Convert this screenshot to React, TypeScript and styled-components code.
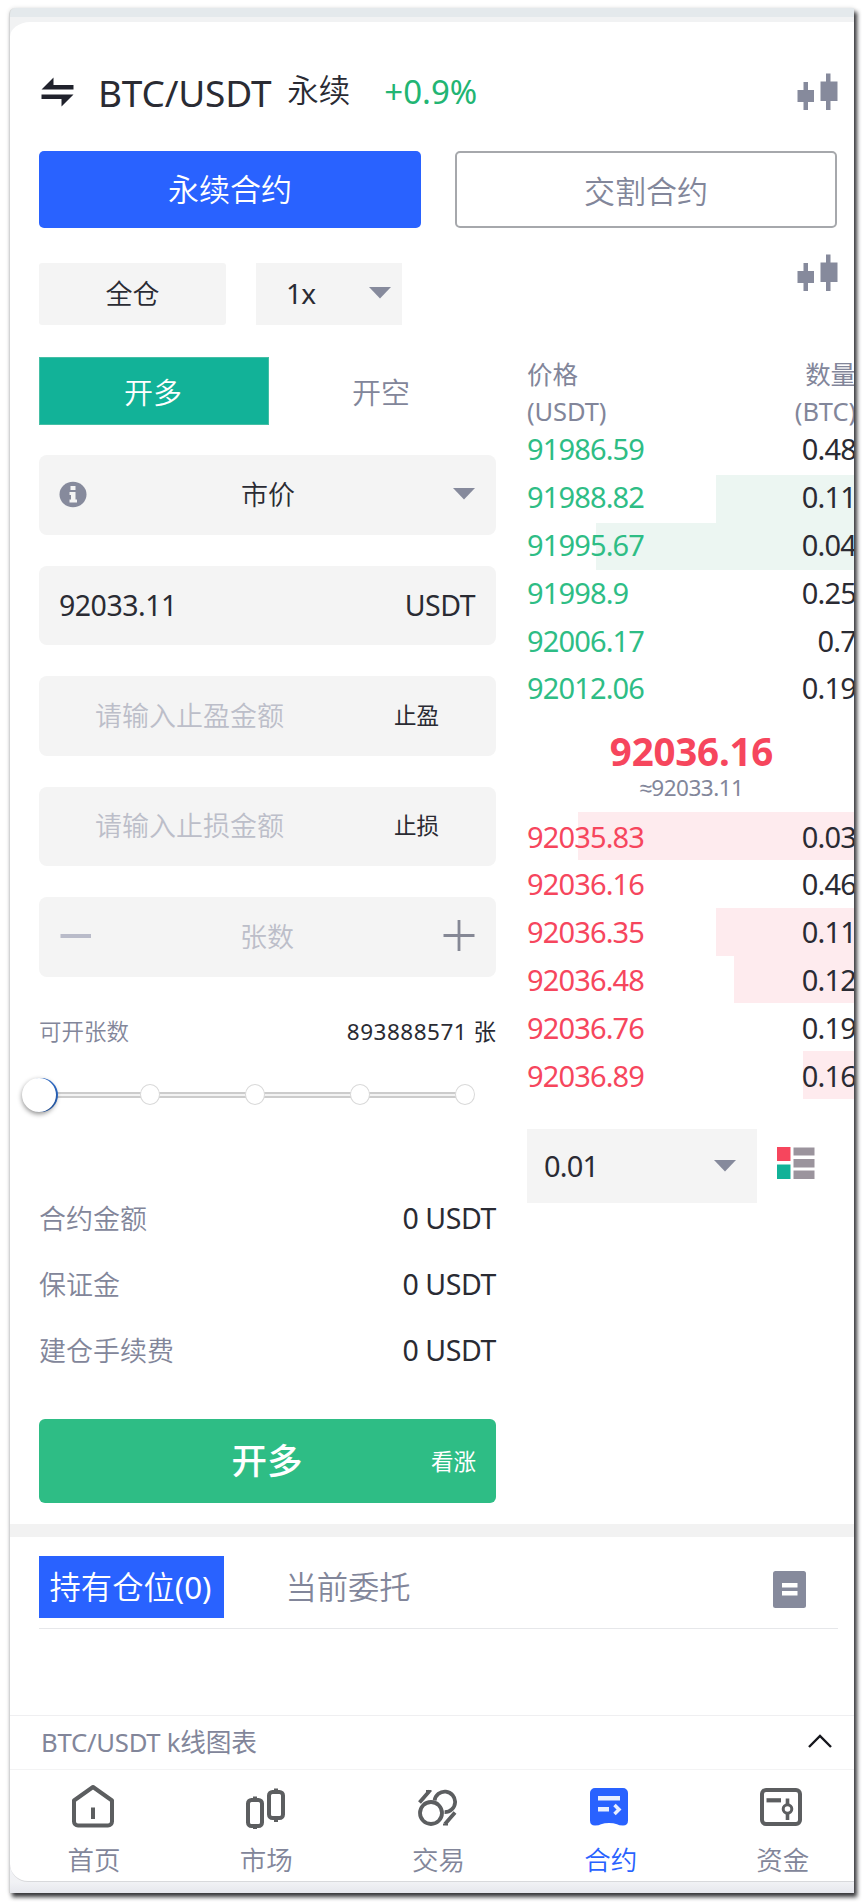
import React from "react";
import styled, { createGlobalStyle } from "styled-components";

const GlobalStyle = createGlobalStyle`
  * { box-sizing: border-box; }
  body {
    margin: 0;
    background: #fff;
    color: #2a2b33;
    font-family: "Noto Sans", "Noto Sans CJK SC", sans-serif;
  }
`;

const muted = "#82869a";

const Page = styled.div`
  width: 865px;
  height: 1904px;
  padding: 8px 11px 11px 9px;
  overflow: hidden;
`;

const Frame = styled.div`
  height: 1885px;
  padding-top: 9px;
  background: linear-gradient(#e4e9ec 0 9px, #f1f2f3 9px 40px, #f1f2f5 1874px, #e6e7ed 1885px);
  border-left: 1px solid #d3d4d5;
  border-radius: 6px 0 0 0;
  box-shadow: 3px 4px 4px 0 rgba(20, 20, 24, 0.85), 0 0 4px rgba(0, 0, 0, 0.12);
  overflow: hidden;
`;

const Card = styled.main`
  display: flex;
  flex-direction: column;
  height: 1865px;
  border-top: 5px solid #f1f2f3;
  background: #fff;
  border-radius: 20px 0 0 18px;
  border-bottom: 1px solid #d8d9dc;
  overflow: hidden;
`;

const Header = styled.header`
  display: flex;
  align-items: center;
  height: 129px;
  padding: 11px 16px 0 31px;
`;

const Pair = styled.h1`
  margin: 1px 0 0 24px;
  font-size: 37px;
  font-weight: 400;
  line-height: 44px;
  letter-spacing: -0.2px;
`;

const PairKind = styled.span`
  margin: -5px 0 0 16px;
  font-size: 31.5px;
  font-weight: 350;
  line-height: 40px;
`;

const Change = styled.span`
  flex: 1;
  margin: 0 0 0 34px;
  color: #22b573;
  font-size: 33px;
  letter-spacing: 0;
  line-height: 40px;
`;

const ContractTabs = styled.div`
  display: grid;
  grid-template-columns: 382px 382px;
  column-gap: 34px;
  height: 77px;
  margin-left: 29px;
`;

const ContractTab = styled.button<{ $active?: boolean }>`
  padding: ${(p) => (p.$active ? "0 0 3px" : "1px 0 0")};
  border: ${(p) => (p.$active ? "0" : "2px solid #a6a8ac")};
  border-radius: 5px;
  background: ${(p) => (p.$active ? "#2962ff" : "#fff")};
  color: ${(p) => (p.$active ? "#fff" : muted)};
  font: 350 31px/40px "Noto Sans CJK SC", sans-serif;
`;

const MarginRow = styled.div`
  display: flex;
  height: 62px;
  margin: 35px 16px 32px 29px;
`;

const MarginMode = styled.div`
  display: flex;
  align-items: center;
  justify-content: center;
  width: 187px;
  padding-bottom: 3px;
  background: #f4f4f4;
  border-radius: 3px;
  font-size: 27px;
  font-weight: 350;
`;

const Leverage = styled.div`
  display: flex;
  align-items: center;
  justify-content: space-between;
  width: 146px;
  margin-left: 30px;
  padding: 0 11px 2px 30px;
  background: #f4f4f4;
  font-size: 28px;
  letter-spacing: -0.8px;
`;

const ChartLink = styled.div`
  margin: -9px 0 0 auto;
`;

const Trading = styled.section`
  display: grid;
  grid-template-columns: 457px 1fr;
  column-gap: 31px;
  height: 1167px;
  margin-left: 29px;
`;

const OrderForm = styled.div`
  display: flex;
  flex-direction: column;
`;

const SideSwitch = styled.div`
  display: flex;
  height: 68px;
  margin-bottom: 30px;
`;

const Side = styled.button<{ $active?: boolean }>`
  width: ${(p) => (p.$active ? "230px" : "226px")};
  padding: 0 2px 0 0;
  border: ${(p) => (p.$active ? "1px solid #45bfa5" : "0")};
  background: ${(p) => (p.$active ? "#12b298" : "transparent")};
  color: ${(p) => (p.$active ? "#fff" : muted)};
  font: 350 29px/38px "Noto Sans CJK SC", sans-serif;
`;

const Field = styled.div`
  display: flex;
  align-items: center;
  justify-content: space-between;
  height: 79.5px;
  margin-bottom: 31px;
  padding: 0 21px 1px 20px;
  background: #f4f4f4;
  border-radius: 8px;
  font-size: 27px;
  font-weight: 350;
`;

const OrderType = styled.span`
  margin: -1px 4px 0 0;
`;

const FieldNumber = styled.span`
  font-size: 28.5px;
  font-weight: 400;
  letter-spacing: -0.5px;
`;

const Placeholder = styled.span<{ $indent?: number }>`
  margin-left: ${(p) => p.$indent ?? 0}px;
  margin-top: -2px;
  color: #bcbec9;
`;

const Trigger = styled.span`
  margin: -2px 36px 0 0;
  font-size: 22.5px;
  font-weight: 400;
`;

const Available = styled.div`
  display: flex;
  justify-content: space-between;
  height: 32px;
  margin-top: 8px;
  font-size: 22.5px;
  line-height: 32px;
`;

const Muted = styled.span`
  color: ${muted};
  font-weight: 350;
`;

const Count = styled.span`
  letter-spacing: 0.5px;
  margin-right: -0.5px;
`;

const Slider = styled.div`
  display: flex;
  align-items: center;
  justify-content: space-between;
  width: 453px;
  height: 40px;
  margin: 27px 0 0 -17px;
  background: linear-gradient(#ccc 0 2px, #f3f3f3 2px 4px, #ccc 4px 6px) 24px 17px / 410px 6px no-repeat;
`;

const Handle = styled.i`
  width: 34px;
  height: 34px;
  margin-right: -1px;
  border-radius: 50%;
  background: #fff;
  box-shadow: 0 2px 5px rgba(0, 0, 0, 0.45), 2px 0 0 #2f6fd0;
`;

const Stop = styled.i`
  width: 20px;
  height: 21px;
  border: 1.5px solid #d9d9d9;
  border-radius: 50%;
  background: #fff;
`;

const Summary = styled.dl`
  margin: 70px 0 0;
`;

const SummaryRow = styled.div`
  display: flex;
  align-items: center;
  justify-content: space-between;
  height: 66px;
`;

const SummaryLabel = styled.dt`
  color: ${muted};
  font-size: 27px;
  font-weight: 350;
`;

const SummaryValue = styled.dd`
  margin: 0;
  font-size: 28.5px;
  letter-spacing: -0.4px;
`;

const Submit = styled.button`
  display: grid;
  grid-template-columns: 1fr auto 1fr;
  align-items: center;
  height: 84px;
  margin-top: 36px;
  padding: 0 20px 4px 19px;
  border: 0;
  border-radius: 6px;
  background: #2ebd85;
  color: #fff;
  font: 500 35.5px/44px "Noto Sans CJK SC", sans-serif;
`;

const SubmitHint = styled.span`
  justify-self: end;
  padding-top: 2px;
  font-size: 22.5px;
  font-weight: 400;
`;

const Book = styled.div`
  width: 329px;
`;

const BookHead = styled.div`
  display: flex;
  justify-content: space-between;
  height: 71px;
  margin-top: -1px;
  color: ${muted};
  font-size: 25.5px;
  line-height: 37px;
  letter-spacing: -0.1px;
`;

const HeadCell = styled.div<{ $right?: boolean }>`
  text-align: ${(p) => (p.$right ? "right" : "left")};
`;

const BookRow = styled.div<{ $tone: "up" | "down"; $depth: number }>`
  display: flex;
  align-items: center;
  justify-content: space-between;
  height: 47.8px;
  padding-bottom: ${(p) => (p.$tone === "up" ? 4 : 0)}px;
  color: ${(p) => (p.$tone === "up" ? "#2ebd85" : "#f6465d")};
  background: linear-gradient(
    to left,
    ${(p) => (p.$tone === "up" ? "#ecf6f2" : "#feebee")} ${(p) => p.$depth}px,
    transparent ${(p) => p.$depth}px
  );
  font-size: 29px;
  letter-spacing: -0.85px;
`;

const Amount = styled.span`
  color: #2a2b33;
`;

const LastPrice = styled.div`
  height: 98.5px;
  padding-top: 13px;
  text-align: center;
`;

const LastValue = styled.div`
  color: #f6465d;
  font-size: 38.5px;
  font-weight: 700;
  line-height: 48px;
  letter-spacing: -0.2px;
`;

const LastApprox = styled.div`
  color: ${muted};
  font-family: "Noto Sans", "Liberation Sans", sans-serif;
  font-size: 22.5px;
  line-height: 25px;
  letter-spacing: -0.5px;
`;

const BookTools = styled.div`
  display: flex;
  align-items: flex-start;
  margin-top: 30px;
`;

const Precision = styled.div`
  display: flex;
  align-items: center;
  justify-content: space-between;
  width: 230px;
  height: 74px;
  margin-right: 20px;
  padding: 0 21px 1px 17px;
  background: #f4f4f4;
  font-size: 29px;
  letter-spacing: -0.8px;
`;

const BookIconWrap = styled.div`
  margin-top: 18px;
`;

const Divider = styled.div`
  height: 13px;
  background: #f2f2f2;
`;

const Positions = styled.section`
  display: flex;
  align-items: flex-start;
  height: 92px;
  margin: 0 16px 0 29px;
  padding-top: 19px;
  border-bottom: 1.5px solid #e6e7ea;
`;

const PositionTab = styled.button<{ $active?: boolean }>`
  width: ${(p) => (p.$active ? "185px" : "250px")};
  height: 62px;
  padding: 0 2px 0 0;
  border: 0;
  background: ${(p) => (p.$active ? "#2962ff" : "transparent")};
  color: ${(p) => (p.$active ? "#fff" : muted)};
  font: 350 31.3px/40px "Noto Sans", "Noto Sans CJK SC", sans-serif;
  white-space: nowrap;
`;

const PositionCount = styled.span`
  font-weight: 400;
`;

const OrdersIcon = styled.div`
  margin: 15px 32px 0 auto;
`;

const ChartBar = styled.div`
  display: flex;
  align-items: center;
  justify-content: space-between;
  height: 55px;
  margin-top: 86px;
  padding: 0 22px 3px 31px;
  border-top: 1.5px solid #efeff1;
  border-bottom: 1.5px solid #f3f3f4;
  color: ${muted};
  font-size: 25.7px;
  letter-spacing: -0.25px;
`;

const Nav = styled.nav`
  display: grid;
  grid-template-columns: repeat(5, 172.2px);
  margin-left: -2px;
`;

const NavItem = styled.a<{ $active?: boolean }>`
  display: flex;
  flex-direction: column;
  align-items: center;
  padding-top: 13px;
  color: ${(p) => (p.$active ? "#2962ff" : muted)};
  font-size: 26.5px;
  font-weight: 350;
  line-height: 36px;

  svg { margin: 0 3px 13px 0; }
`;

const Candles = () => (
  <svg width="41" height="38" viewBox="0 0 41 38" fill="#868a9c">
    <path d="M6.500 9h4.500v8h6v12h-6v8H6.500v-8h-6V17h6zM29 .5h4.500v8h7V28h-7v9H29v-9h-5.500V8.500H29z" />
  </svg>
);

const Swap = () => (
  <svg width="33" height="30" viewBox="0 0 33 30" fill="#20222c">
    <path d="M.5 12.500 12.500.5V8H32.500v4.500zM.5 17.500h32L20.500 29.500V22H.5z" />
  </svg>
);

const Caret = () => (
  <svg width="22" height="12" viewBox="0 0 22 12" fill="#868a9c">
    <path d="M0 0h22L11 11.500z" />
  </svg>
);

const Info = () => (
  <svg width="28" height="28" viewBox="0 0 28 28">
    <ellipse cx="14" cy="14.500" rx="13.500" ry="12.700" fill="#868a9c" />
    <path d="M11.500 6h5v4h-5zM10.500 12h6v7.500h1.500v3h-7.500v-3H12V15h-1.500z" fill="#f4f4f4" />
  </svg>
);

const Minus = () => (
  <svg width="32" height="32" viewBox="0 0 32 32">
    <path d="M1.500 16h30.500" stroke="#b9bbc9" strokeWidth="4" />
  </svg>
);

const Plus = () => (
  <svg width="32" height="32" viewBox="0 0 32 32">
    <path d="M.5 15.500h31M16 0v31" stroke="#858895" strokeWidth="2.800" />
  </svg>
);

const BookIcon = () => (
  <svg width="38" height="32" viewBox="0 0 38 32">
    <path d="M0 0h13.500v14H0z" fill="#f6465d" />
    <path d="M0 17.500h13.500V32H0z" fill="#12b298" />
    <path d="M16.500.5H37.500v8h-21zM16.500 12H37.500v8.500h-21zM16.500 23.500H37.500V32h-21z" fill="#9b949d" />
  </svg>
);

const Records = () => (
  <svg width="33" height="37" viewBox="0 0 33 37">
    <rect width="33" height="37" rx="2.500" fill="#868a9c" />
    <path d="M9 12h15.500v4.500H9zM9 20h15.500v4.500H9z" fill="#fff" />
  </svg>
);

const ChevronUp = () => (
  <svg width="24" height="14" viewBox="0 0 24 14" fill="none" stroke="#16171d" strokeWidth="2.400">
    <path d="M1 13 12 2l11 11" />
  </svg>
);

const HomeIcon = () => (
  <svg width="44" height="46" viewBox="0 0 44 46" fill="none" stroke="#5c5e60" strokeWidth="4">
    <path d="M3 17.500 22 4l19 13.500V38.500a4 4 0 0 1-4 4H7a4 4 0 0 1-4-4z" strokeLinejoin="round" />
    <path d="M22 24.500v11.500" />
  </svg>
);

const MarketIcon = () => (
  <svg width="40" height="46" viewBox="0 0 40 46" fill="none" stroke="#5c5e60" strokeWidth="4">
    <rect x="3" y="17" width="14" height="26" rx="3.500" />
    <rect x="24" y="9" width="14" height="26" rx="3.500" />
    <path d="M10 13.500v4M10 43v3M31 5.500v4M31 35v4" />
  </svg>
);

const TradeIcon = () => (
  <svg width="40" height="46" viewBox="0 0 40 46" fill="none" stroke="#5c5e60" strokeWidth="3.800">
    <circle cx="14" cy="30" r="11" />
    <path d="M17.600 17.500a10.300 10.300 0 1 1 10 11.700" />
    <path d="M2.500 19.500 12.500 8M28 41 38 29.500" />
    <path d="M9 8h5.500M26 41.500h5" strokeWidth="2" />
  </svg>
);

const ContractIcon = () => (
  <svg width="40" height="46" viewBox="0 0 40 46">
    <path d="M6 5h28a5 5 0 0 1 5 5V37.500q0 5-5 5-4 0-6-1.200-3.500-1.300-8-1.300t-8 1.300Q10 42.500 6 42.500q-5 0-5-5V10a5 5 0 0 1 5-5z" fill="#2962ff" />
    <path d="M9 13h22v4.500H9zM9 24h11v4.500H9z" fill="#e9effe" />
    <path d="M25.500 22 30 26.500l-4.500 4.500" fill="none" stroke="#e9effe" strokeWidth="3.500" />
  </svg>
);

const AssetsIcon = () => (
  <svg width="44" height="46" viewBox="0 0 44 46" fill="none" stroke="#5c5e60">
    <rect x="3" y="7" width="38" height="34" rx="4" strokeWidth="4" />
    <path d="M7.500 17.300H22" strokeWidth="4.200" />
    <circle cx="28.500" cy="26" r="4.300" strokeWidth="3" />
    <path d="M28.500 15.500v6M28.500 30.500v6.500" strokeWidth="3.600" />
  </svg>
);

const bids: [string, string, number][] = [
  ["91986.59", "0.48", 0],
  ["91988.82", "0.11", 140],
  ["91995.67", "0.04", 260],
  ["91998.9", "0.25", 0],
  ["92006.17", "0.7", 0],
  ["92012.06", "0.19", 0],
];

const asks: [string, string, number][] = [
  ["92035.83", "0.03", 278],
  ["92036.16", "0.46", 0],
  ["92036.35", "0.11", 140],
  ["92036.48", "0.12", 122],
  ["92036.76", "0.19", 0],
  ["92036.89", "0.16", 53],
];

const costs = ["合约金额", "保证金", "建仓手续费"];

const navItems = [
  { label: "首页", Icon: HomeIcon },
  { label: "市场", Icon: MarketIcon },
  { label: "交易", Icon: TradeIcon },
  { label: "合约", Icon: ContractIcon, active: true },
  { label: "资金", Icon: AssetsIcon },
];

export default function App() {
  return (
    <Page>
      <GlobalStyle />
      <Frame>
        <Card>
          <Header>
            <Swap />
            <Pair>BTC/USDT</Pair>
            <PairKind>永续</PairKind>
            <Change>+0.9%</Change>
            <Candles />
          </Header>

          <ContractTabs>
            <ContractTab $active>永续合约</ContractTab>
            <ContractTab>交割合约</ContractTab>
          </ContractTabs>

          <MarginRow>
            <MarginMode>全仓</MarginMode>
            <Leverage>
              1x
              <Caret />
            </Leverage>
            <ChartLink>
              <Candles />
            </ChartLink>
          </MarginRow>

          <Trading>
            <OrderForm>
              <SideSwitch>
                <Side $active>开多</Side>
                <Side>开空</Side>
              </SideSwitch>
              <Field>
                <Info />
                <OrderType>市价</OrderType>
                <Caret />
              </Field>
              <Field>
                <FieldNumber>92033.11</FieldNumber>
                <FieldNumber>USDT</FieldNumber>
              </Field>
              <Field>
                <Placeholder $indent={36}>请输入止盈金额</Placeholder>
                <Trigger>止盈</Trigger>
              </Field>
              <Field>
                <Placeholder $indent={36}>请输入止损金额</Placeholder>
                <Trigger>止损</Trigger>
              </Field>
              <Field>
                <Minus />
                <Placeholder>张数</Placeholder>
                <Plus />
              </Field>
              <Available>
                <Muted>可开张数</Muted>
                <Count>893888571 张</Count>
              </Available>
              <Slider>
                <Handle />
                <Stop />
                <Stop />
                <Stop />
                <Stop />
              </Slider>
              <Summary>
                {costs.map((label) => (
                  <SummaryRow key={label}>
                    <SummaryLabel>{label}</SummaryLabel>
                    <SummaryValue>0 USDT</SummaryValue>
                  </SummaryRow>
                ))}
              </Summary>
              <Submit>
                <span />
                <span>开多</span>
                <SubmitHint>看涨</SubmitHint>
              </Submit>
            </OrderForm>

            <Book>
              <BookHead>
                <HeadCell>
                  价格
                  <br />
                  (USDT)
                </HeadCell>
                <HeadCell $right>
                  数量
                  <br />
                  (BTC)
                </HeadCell>
              </BookHead>
              {bids.map(([price, amount, depth]) => (
                <BookRow key={price} $tone="up" $depth={depth}>
                  {price}
                  <Amount>{amount}</Amount>
                </BookRow>
              ))}
              <LastPrice>
                <LastValue>92036.16</LastValue>
                <LastApprox>≈92033.11</LastApprox>
              </LastPrice>
              {asks.map(([price, amount, depth]) => (
                <BookRow key={price} $tone="down" $depth={depth}>
                  {price}
                  <Amount>{amount}</Amount>
                </BookRow>
              ))}
              <BookTools>
                <Precision>
                  0.01
                  <Caret />
                </Precision>
                <BookIconWrap>
                  <BookIcon />
                </BookIconWrap>
              </BookTools>
            </Book>
          </Trading>

          <Divider />

          <Positions>
            <PositionTab $active>
              持有仓位<PositionCount>(0)</PositionCount>
            </PositionTab>
            <PositionTab>当前委托</PositionTab>
            <OrdersIcon>
              <Records />
            </OrdersIcon>
          </Positions>

          <ChartBar>
            <span>BTC/USDT k线图表</span>
            <ChevronUp />
          </ChartBar>

          <Nav>
            {navItems.map(({ label, Icon, active }) => (
              <NavItem key={label} $active={active}>
                <Icon />
                {label}
              </NavItem>
            ))}
          </Nav>
        </Card>
      </Frame>
    </Page>
  );
}
